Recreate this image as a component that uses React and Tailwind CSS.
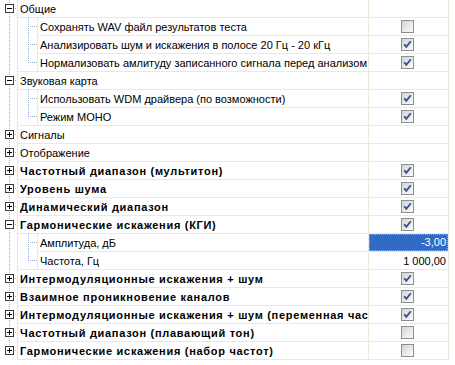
import React from "react";

const DOT = "#9aaed0";
const GRID = "#ECE9D8";

const rows = [
  { l: 0, t: "Общие", exp: "-" },
  { l: 1, t: "Сохранять WAV файл результатов теста", cb: false },
  { l: 1, t: "Анализировать шум и искажения в полосе 20 Гц - 20 кГц", cb: true },
  { l: 1, t: "Нормализовать амлитуду записанного сигнала перед анализом", cb: true, last: true },
  { l: 0, t: "Звуковая карта", exp: "-" },
  { l: 1, t: "Использовать WDM драйвера (по возможности)", cb: true },
  { l: 1, t: "Режим МОНО", cb: true, last: true },
  { l: 0, t: "Сигналы", exp: "+" },
  { l: 0, t: "Отображение", exp: "+" },
  { l: 0, t: "Частотный диапазон (мультитон)", exp: "+", b: true, cb: true },
  { l: 0, t: "Уровень шума", exp: "+", b: true, cb: true },
  { l: 0, t: "Динамический диапазон", exp: "+", b: true, cb: true },
  { l: 0, t: "Гармонические искажения (КГИ)", exp: "-", b: true, cb: true },
  { l: 1, t: "Амплитуда, дБ", val: "-3,00", sel: true },
  { l: 1, t: "Частота, Гц", val: "1 000,00", last: true },
  { l: 0, t: "Интермодуляционные искажения + шум", exp: "+", b: true, cb: true },
  { l: 0, t: "Взаимное проникновение каналов", exp: "+", b: true, cb: true },
  { l: 0, t: "Интермодуляционные искажения + шум (переменная частота)", exp: "+", b: true, cb: true },
  { l: 0, t: "Частотный диапазон (плавающий тон)", exp: "+", b: true, cb: false },
  { l: 0, t: "Гармонические искажения (набор частот)", exp: "+", b: true, cb: false, lastRoot: true },
];

function Tree({ r }) {
  if (r.l === 0) {
    return (
      <svg width="17" height="18" className="shrink-0 block" shapeRendering="crispEdges">
        <line x1="9.5" y1="0" x2="9.5" y2="4" stroke={DOT} strokeDasharray="1 1" />
        {!r.lastRoot && (
          <line x1="9.5" y1="14" x2="9.5" y2="18" stroke={DOT} strokeDasharray="1 1" />
        )}
        <line x1="15" y1="8.5" x2="17" y2="8.5" stroke={DOT} strokeDasharray="1 1" />
        <rect x="5.5" y="4.5" width="8" height="8" fill="#fff" stroke="#3a3a3a" />
        <line x1="7" y1="8.5" x2="12" y2="8.5" stroke="#000" />
        {r.exp === "+" && <line x1="9.5" y1="6" x2="9.5" y2="11" stroke="#000" />}
      </svg>
    );
  }
  return (
    <svg width="37" height="18" className="shrink-0 block" shapeRendering="crispEdges">
      <line x1="9.5" y1="0" x2="9.5" y2="18" stroke={DOT} strokeDasharray="1 1" />
      <line x1="17.5" y1="0" x2="17.5" y2="18" stroke={GRID} />
      <line x1="28.5" y1="0" x2="28.5" y2={r.last ? 9 : 18} stroke={DOT} strokeDasharray="1 1" />
      <line x1="30" y1="8.5" x2="37" y2="8.5" stroke={DOT} strokeDasharray="1 1" />
      {r.last && <line x1="17" y1="17.5" x2="37" y2="17.5" stroke={GRID} />}
    </svg>
  );
}

function Check({ on }) {
  return (
    <div className="ml-[32px] mt-[2px] w-[13px] h-[13px] border border-[#8e8f8f] bg-[linear-gradient(135deg,#d6d6d0,#f9f9f7)] flex items-center justify-center">
      {on && (
        <svg width="11" height="11" viewBox="0 0 11 11">
          <path d="M2.2 5.2 L4.3 7.8 L8.8 2.2" stroke="#2c4e9c" strokeWidth="1.8" fill="none" />
        </svg>
      )}
    </div>
  );
}

function Row({ r }) {
  return (
    <div className="flex h-[18px]">
      <Tree r={r} />
      <div className="flex flex-1 min-w-0 border-l border-b border-[#ECE9D8]">
        <div
          className={`flex-1 min-w-0 overflow-hidden whitespace-nowrap pl-[2px] pt-px leading-[16px] text-[11px] text-black ${
            r.b ? "font-bold tracking-[0.7px]" : ""
          }`}
        >
          {r.t}
        </div>
        <div className="w-[81px] shrink-0 border-l border-r border-[#ECE9D8] overflow-hidden">
          {r.cb !== undefined && <Check on={r.cb} />}
          {r.val &&
            (r.sel ? (
              <div className="h-full bg-[#316AC5] border border-dotted border-[#e9a53a] text-white text-right pr-[1px] text-[11px] leading-[15px]">
                {r.val}
              </div>
            ) : (
              <div className="h-full text-black text-right pr-[2px] pt-px text-[11px] leading-[16px]">{r.val}</div>
            ))}
        </div>
      </div>
      <div className="w-[6px] shrink-0" />
    </div>
  );
}

export default function App() {
  return (
    <div
      className="w-[455px] h-[365px] bg-white overflow-hidden"
      style={{ fontFamily: '"Liberation Sans", Arial, sans-serif' }}
    >
      {rows.map((r, i) => (
        <Row key={i} r={r} />
      ))}
    </div>
  );
}
